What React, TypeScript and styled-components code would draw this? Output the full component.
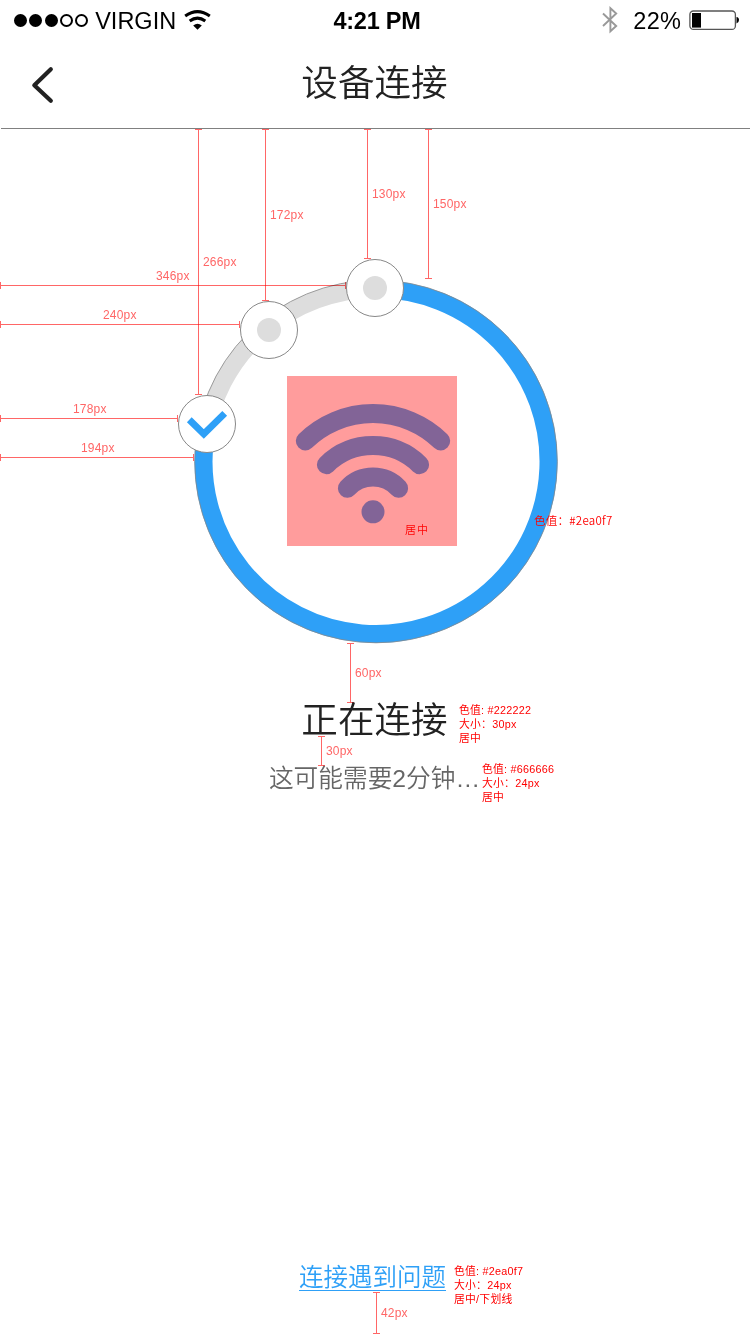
import React from "react";
import styled, { createGlobalStyle } from "styled-components";

const sans = `"Liberation Sans", "Noto Sans CJK SC", sans-serif`;
const blue = "#2ea0f7";
const ink = "#222222";
const guide = "#ff6666";

const GlobalStyle = createGlobalStyle`
  * { box-sizing: border-box; }
  body { margin: 0; background: #fff; font-family: ${sans}; }
`;

const Screen = styled.div`
  position: relative;
  display: flex;
  flex-direction: column;
  width: 750px;
  height: 1334px;
  overflow: hidden;
  background: #fff;
`;

const StatusBar = styled.div`
  display: grid;
  grid-template-columns: 1fr auto 1fr;
  align-items: center;
  height: 40px;
  padding: 0 10px 0 14px;
  color: #000;
`;

const StatusGroup = styled.div<{ $end?: boolean }>`
  display: flex;
  align-items: center;
  height: 40px;
  justify-content: ${(p) => (p.$end ? "flex-end" : "flex-start")};
`;

const Signal = styled.div`
  display: flex;
  gap: 2.3px;
  margin-right: 7px;
`;

const SignalDot = styled.span<{ $on: boolean }>`
  width: 13px;
  height: 13px;
  border-radius: 50%;
  border: 2px solid #000;
  background: ${(p) => (p.$on ? "#000" : "#fff")};
`;

const StatusText = styled.span<{ $bold?: boolean; $spacing?: number }>`
  font-size: 23.5px;
  line-height: 38px;
  padding-top: 2px;
  font-weight: ${(p) => (p.$bold ? 700 : 400)};
  letter-spacing: ${(p) => p.$spacing ?? 0}px;
  white-space: nowrap;
`;

const WifiGlyph = styled.svg`
  margin-left: 8px;
`;

const BluetoothGlyph = styled.svg`
  margin-right: 15px;
`;

const BatteryGlyph = styled.svg`
  margin-left: 8px;
`;

const NavBar = styled.header`
  display: grid;
  grid-template-columns: 1fr auto 1fr;
  align-items: center;
  height: 89px;
  margin-left: 1px;
  padding-left: 29px;
  padding-right: 31px;
  border-bottom: 1px solid #808080;
`;

const BackButton = styled.button`
  display: flex;
  width: 28px;
  height: 40px;
  padding: 0;
  border: 0;
  margin-top: 1px;
  background: none;
`;

const Title = styled.h1`
  margin: -1px 0 0;
  font-size: 36.6px;
  line-height: 48px;
  font-weight: 350;
  color: ${ink};
`;

const Main = styled.main`
  display: flex;
  flex: 1;
  flex-direction: column;
  align-items: center;
`;

const Dial = styled.svg`
  display: block;
  flex: none;
  margin-top: 121px;
`;

const Heading = styled.h2`
  margin: 47px 1px 0 0;
  font-size: 36.6px;
  line-height: 48px;
  font-weight: 350;
  color: ${ink};
`;

const Hint = styled.p`
  margin: 16px 1px 0 0;
  font-size: 24.7px;
  line-height: 36px;
  font-weight: 350;
  color: #666;
`;

const HelpLink = styled.a`
  margin-top: auto;
  margin-bottom: 43px;
  margin-right: 5px;
  height: 28px;
  font-size: 24.5px;
  line-height: 30px;
  font-weight: 350;
  color: ${blue};
  border-bottom: 1px solid ${blue};
`;

const Guide = styled.i<{ $x: number; $y: number; $length: number; $vertical?: boolean }>`
  position: absolute;
  left: ${(p) => p.$x}px;
  top: ${(p) => p.$y}px;
  width: ${(p) => (p.$vertical ? 7 : p.$length)}px;
  height: ${(p) => (p.$vertical ? p.$length : 7)}px;
  border: 0 solid ${guide};
  border-width: ${(p) => (p.$vertical ? "1px 0" : "0 1px")};
  background: linear-gradient(${guide}, ${guide}) center / ${(p) =>
    p.$vertical ? "1px 100%" : "100% 1px"} no-repeat;
  mix-blend-mode: multiply;
`;

const GuideLabel = styled.span<{ $x: number; $y: number }>`
  position: absolute;
  left: ${(p) => p.$x}px;
  top: ${(p) => p.$y}px;
  font-size: 12px;
  line-height: 14px;
  letter-spacing: 0.2px;
  color: ${guide};
  white-space: nowrap;
`;

const Note = styled.div<{ $x: number; $y: number; $cjk?: boolean; $size?: number; $spacing?: number }>`
  position: absolute;
  left: ${(p) => p.$x}px;
  top: ${(p) => p.$y}px;
  font-family: ${(p) => (p.$cjk ? `"Noto Sans CJK SC", sans-serif` : sans)};
  font-size: ${(p) => p.$size ?? 11}px;
  line-height: 14px;
  font-weight: ${(p) => (p.$cjk ? 350 : 400)};
  letter-spacing: ${(p) => p.$spacing ?? 0}px;
  color: #ff0000;
  white-space: nowrap;
`;

const guides = [
  { x: 195, y: 129, length: 266, vertical: true, label: "266px", lx: 203, ly: 255 },
  { x: 262, y: 129, length: 172, vertical: true, label: "172px", lx: 270, ly: 208 },
  { x: 364, y: 129, length: 130, vertical: true, label: "130px", lx: 372, ly: 187 },
  { x: 425, y: 129, length: 150, vertical: true, label: "150px", lx: 433, ly: 197 },
  { x: 0, y: 282, length: 346, vertical: false, label: "346px", lx: 156, ly: 269 },
  { x: 0, y: 321, length: 240, vertical: false, label: "240px", lx: 103, ly: 308 },
  { x: 0, y: 415, length: 178, vertical: false, label: "178px", lx: 73, ly: 402 },
  { x: 0, y: 454, length: 194, vertical: false, label: "194px", lx: 81, ly: 441 },
  { x: 347, y: 643, length: 60, vertical: true, label: "60px", lx: 355, ly: 666 },
  { x: 318, y: 736, length: 30, vertical: true, label: "30px", lx: 326, ly: 744 },
  { x: 373, y: 1292, length: 42, vertical: true, label: "42px", lx: 381, ly: 1306 },
];

const notes = [
  { x: 459, y: 702.5, lines: ["色值: #222222", "大小：30px", "居中"] },
  { x: 482, y: 761.5, lines: ["色值: #666666", "大小：24px", "居中"] },
  { x: 454, y: 1263.5, lines: ["色值: #2ea0f7", "大小：24px", "居中/下划线"] },
];

function ProgressDial() {
  return (
    <Dial width="400" height="400" viewBox="175 250 400 400">
      <path d="M375 289A172.5 172.5 0 1 1 205 439" fill="none" stroke={blue} strokeWidth="18" />
      <path d="M205 439A172.5 172.5 0 0 1 375 289" fill="none" stroke="#ddd" strokeWidth="18" />
      <circle cx="376" cy="461.5" r="181.3" fill="none" stroke="#888" strokeWidth="0.8" />
      <g fill="#fff" stroke="#888" strokeWidth="1">
        <circle cx="375" cy="288" r="28.5" />
        <circle cx="269" cy="330" r="28.5" />
        <circle cx="207" cy="424" r="28.5" />
      </g>
      <circle cx="375" cy="288" r="12" fill="#ddd" />
      <circle cx="269" cy="330" r="12" fill="#ddd" />
      <path d="M189.3 419.8 203.8 433.9 224.7 413.3" fill="none" stroke={blue} strokeWidth="6.8" />
      <rect x="287" y="376" width="170" height="170" fill="#ff9c9c" />
      <g fill="none" stroke="#826497" strokeWidth="19" strokeLinecap="round">
        <path d="M305.3 441A97.2 97.2 0 0 1 440.7 441" />
        <path d="M326.4 464.7A66.4 66.4 0 0 1 419.6 464.7" />
        <path d="M347.4 488.3A34.9 34.9 0 0 1 398.6 488.3" />
      </g>
      <circle cx="373" cy="511.8" r="11.5" fill="#826497" />
    </Dial>
  );
}

export default function App() {
  return (
    <>
      <GlobalStyle />
      <Screen>
        <StatusBar>
          <StatusGroup>
            <Signal>
              {[true, true, true, false, false].map((on, i) => (
                <SignalDot key={i} $on={on} />
              ))}
            </Signal>
            <StatusText>VIRGIN</StatusText>
            <WifiGlyph width="27" height="22" viewBox="0 0 27 22">
              <g fill="none" stroke="#000" strokeWidth="3">
                <path d="M1.2 7Q13.5 -1.8 25.8 7" />
                <path d="M5.7 12Q13.5 6.2 21.3 12" />
              </g>
              <path d="M9.2 16.4Q13.5 13 17.8 16.4L13.5 20.8Z" />
            </WifiGlyph>
          </StatusGroup>
          <StatusText $bold $spacing={-0.25}>4:21 PM</StatusText>
          <StatusGroup $end>
            <BluetoothGlyph width="16" height="28" viewBox="0 0 16 28">
              <path d="M1 7.5 14.2 20 8.4 25.3V2.2L14.2 7.5 1 20" fill="none" stroke="#999" strokeWidth="1.9" />
            </BluetoothGlyph>
            <StatusText $spacing={0.2}>22%</StatusText>
            <BatteryGlyph width="51" height="21" viewBox="0 0 51 21">
              <rect x="0.9" y="1" width="45.5" height="18.4" rx="3.5" fill="none" stroke="#555" strokeWidth="1.3" />
              <rect x="3" y="3" width="9" height="14.6" fill="#000" />
              <path d="M47.5 7Q50 7.3 50 10.1T47.5 13.4Z" />
            </BatteryGlyph>
          </StatusGroup>
        </StatusBar>
        <NavBar>
          <BackButton aria-label="返回">
            <svg width="28" height="40" viewBox="0 0 28 40">
              <path d="M20.8 4.2 4.3 20.2 20.8 35.8" fill="none" stroke={ink} strokeWidth="4.2" strokeLinecap="round" strokeLinejoin="round" />
            </svg>
          </BackButton>
          <Title>设备连接</Title>
        </NavBar>
        <Main>
          <ProgressDial />
          <Heading>正在连接</Heading>
          <Hint>这可能需要2分钟…</Hint>
          <HelpLink>连接遇到问题</HelpLink>
        </Main>
        {guides.map((g) => (
          <React.Fragment key={g.label}>
            <Guide $x={g.x} $y={g.y} $length={g.length} $vertical={g.vertical} />
            <GuideLabel $x={g.lx} $y={g.ly}>{g.label}</GuideLabel>
          </React.Fragment>
        ))}
        <Note $x={405} $y={522} $cjk $size={11} $spacing={1}>居中</Note>
        <Note $x={534} $y={513} $cjk $size={11.5} $spacing={0.25}>色值：#2ea0f7</Note>
        {notes.map((n) => (
          <Note key={n.x} $x={n.x} $y={n.y} $size={10.8} $spacing={0.25}>
            {n.lines.map((line) => (
              <div key={line}>{line}</div>
            ))}
          </Note>
        ))}
      </Screen>
    </>
  );
}
